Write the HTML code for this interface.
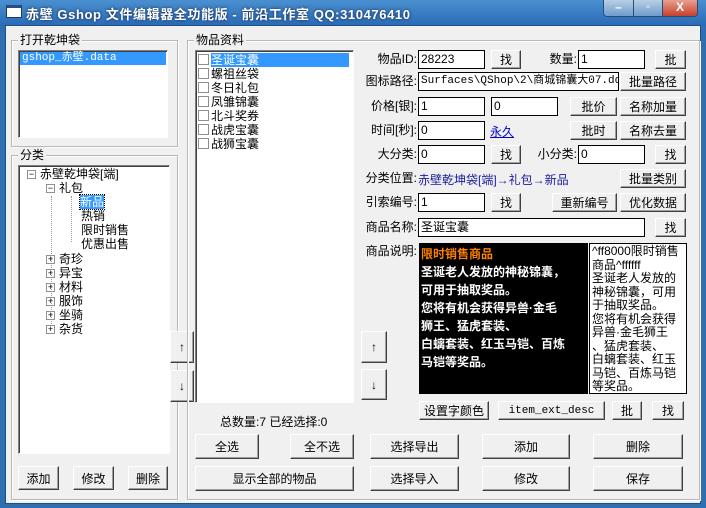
<!DOCTYPE html>
<html><head><meta charset="utf-8"><style>
*{box-sizing:border-box;margin:0;padding:0}
body{width:706px;height:508px;overflow:hidden;background:#2f6fb0;font:12px "Liberation Sans","Noto Sans CJK SC","WenQuanYi Zen Hei",sans-serif;color:#000;position:relative}
.a{position:absolute}
#title{left:0;top:0;width:706px;height:26px;background:linear-gradient(#4a90d0,#2a6ab6);}
#client{left:5px;top:25px;width:696px;height:479px;background:#f0f0f0;border:1px solid #1a4f8a}
.grp{position:absolute;border:1px solid #b8b8b8;box-shadow:inset 1px 1px 0 #fff,1px 1px 0 #fff}
.grp>span{position:absolute;top:-9px;left:6px;background:#f0f0f0;padding:0 2px;line-height:16px}
.box{position:absolute;background:#fff;border:1px solid;border-color:#808080 #fff #fff #808080;box-shadow:inset 1px 1px 0 #404040}
.btn{position:absolute;background:#f0f0f0;border:1px solid;border-color:#fff #404040 #404040 #fff;box-shadow:inset -1px -1px 0 #a0a0a0;text-align:center;display:flex;align-items:center;justify-content:center;white-space:nowrap}
.in{position:absolute;background:#fff;border:1px solid #000;padding-left:2px;line-height:16px;white-space:nowrap;overflow:hidden}
.lb{position:absolute;text-align:right;width:80px;line-height:18px}
.row{position:absolute;line-height:14px;white-space:nowrap}
.pm{display:inline-block;width:9px;height:9px;border:1px solid #919191;background:#fff;font-size:9px;line-height:7px;text-align:center;vertical-align:middle;margin-right:4px}
.cb{display:inline-block;width:11px;height:11px;border:1px solid #8e8e8e;background:#fff;vertical-align:-1px;margin-right:2px}
</style></head><body>
<div id="title" class="a"></div>
<div class="a" style="left:6px;top:5px;width:16px;height:13px;background:#fff;border:1px solid #1a3a6a;border-top:3px solid #2a4a8a"></div>
<div class="a" style="left:26px;top:4px;color:#fff;font-weight:bold;font-size:13px;letter-spacing:0.6px;white-space:nowrap;text-shadow:0 0 3px #124">赤壁 Gshop 文件编辑器全功能版 - 前沿工作室 QQ:310476410</div>
<div class="a" style="left:603px;top:0;width:95px;height:17px;border:1px solid #2a4a7a;border-top:0;border-radius:0 0 4px 4px;display:flex;overflow:hidden">
<div style="width:30px;background:linear-gradient(#b8cfe6,#6f9ccb);border-right:1px solid #2a4a7a;color:#fff;text-align:center;font-weight:bold;line-height:14px">–</div>
<div style="width:29px;background:linear-gradient(#b8cfe6,#6f9ccb);border-right:1px solid #2a4a7a;color:#fff;text-align:center;font-size:10px;line-height:15px">▫</div>
<div style="flex:1;background:linear-gradient(#e8a090,#c8402a);color:#fff;text-align:center;font-weight:bold;line-height:15px">X</div></div>
<div id="client" class="a"></div>

<div class="grp" style="left:11px;top:40px;width:167px;height:107px"><span>打开乾坤袋</span></div>
<div class="box" style="left:18px;top:50px;width:150px;height:88px"><div style="background:#3399ff;color:#fff;margin:1px;padding-left:2px;line-height:13px;font-family:'Liberation Mono','Noto Sans CJK SC',monospace;font-size:11px">gshop_赤壁.data</div></div>

<div class="grp" style="left:11px;top:155px;width:167px;height:345px"><span>分类</span></div>
<div class="box" style="left:18px;top:165px;width:152px;height:289px"></div>
<div class="row" style="left:27px;top:167px"><span class="pm">−</span>赤壁乾坤袋[端]</div>
<div class="row" style="left:46px;top:181px"><span class="pm">−</span>礼包</div>
<div class="row" style="left:80px;top:195px"><span style="background:#3399ff;color:#fff;outline:1px dotted #000">新品</span></div>
<div class="row" style="left:81px;top:209px">热销</div>
<div class="row" style="left:81px;top:223px">限时销售</div>
<div class="row" style="left:81px;top:237px">优惠出售</div>
<div class="row" style="left:46px;top:252px"><span class="pm">+</span>奇珍</div>
<div class="row" style="left:46px;top:266px"><span class="pm">+</span>异宝</div>
<div class="row" style="left:46px;top:280px"><span class="pm">+</span>材料</div>
<div class="row" style="left:46px;top:294px"><span class="pm">+</span>服饰</div>
<div class="row" style="left:46px;top:308px"><span class="pm">+</span>坐骑</div>
<div class="row" style="left:46px;top:322px"><span class="pm">+</span>杂货</div>
<div class="a" style="left:51px;top:196px;height:130px;border-left:1px dotted #999"></div>
<div class="a" style="left:71px;top:196px;height:46px;border-left:1px dotted #999"></div>
<div class="btn" style="left:18px;top:466px;width:41px;height:24px">添加</div>
<div class="btn" style="left:73px;top:466px;width:41px;height:24px">修改</div>
<div class="btn" style="left:128px;top:466px;width:40px;height:24px">删除</div>
<div class="btn" style="left:170px;top:331px;width:24px;height:32px">↑</div>
<div class="btn" style="left:170px;top:370px;width:24px;height:32px">↓</div>

<div class="grp" style="left:187px;top:40px;width:513px;height:460px"><span>物品资料</span></div>
<div class="box" style="left:195px;top:50px;width:159px;height:353px;padding:2px">
<div style="line-height:14px"><span class="cb"></span><span style="background:#3399ff;color:#fff;display:inline-block;width:138px">圣诞宝囊</span></div>
<div style="line-height:14px"><span class="cb"></span>螺祖丝袋</div>
<div style="line-height:14px"><span class="cb"></span>冬日礼包</div>
<div style="line-height:14px"><span class="cb"></span>凤雏锦囊</div>
<div style="line-height:14px"><span class="cb"></span>北斗奖券</div>
<div style="line-height:14px"><span class="cb"></span>战虎宝囊</div>
<div style="line-height:14px"><span class="cb"></span>战狮宝囊</div></div>
<div class="a" style="left:220px;top:413px">总数量:7 已经选择:0</div>
<div class="btn" style="left:195px;top:434px;width:64px;height:25px">全选</div>
<div class="btn" style="left:290px;top:434px;width:64px;height:25px">全不选</div>
<div class="btn" style="left:195px;top:466px;width:159px;height:25px">显示全部的物品</div>

<div class="lb" style="left:337px;top:50px">物品ID:</div><div class="in" style="left:418px;top:50px;width:67px;height:19px">28223</div>
<div class="btn" style="left:491px;top:50px;width:30px;height:19px">找</div>
<div class="lb" style="left:497px;top:50px">数量:</div><div class="in" style="left:578px;top:50px;width:67px;height:19px">1</div>
<div class="btn" style="left:655px;top:50px;width:31px;height:19px">批</div>

<div class="lb" style="left:337px;top:72px">图标路径:</div><div class="in" style="left:418px;top:72px;width:201px;height:19px;font-family:'Liberation Mono','Noto Sans CJK SC',monospace;font-size:11px">Surfaces\QShop\2\商城锦囊大07.dds</div>
<div class="btn" style="left:620px;top:72px;width:66px;height:19px">批量路径</div>

<div class="lb" style="left:337px;top:97px">价格[银]:</div><div class="in" style="left:418px;top:97px;width:67px;height:19px">1</div>
<div class="in" style="left:491px;top:97px;width:67px;height:19px">0</div>
<div class="btn" style="left:570px;top:97px;width:47px;height:19px">批价</div>
<div class="btn" style="left:620px;top:97px;width:66px;height:19px">名称加量</div>

<div class="lb" style="left:337px;top:121px">时间[秒]:</div><div class="in" style="left:418px;top:121px;width:67px;height:19px">0</div>
<div class="a" style="left:490px;top:123px;color:#0000cc;text-decoration:underline">永久</div>
<div class="btn" style="left:570px;top:121px;width:47px;height:19px">批时</div>
<div class="btn" style="left:620px;top:121px;width:66px;height:19px">名称去量</div>

<div class="lb" style="left:337px;top:145px">大分类:</div><div class="in" style="left:418px;top:145px;width:67px;height:19px">0</div>
<div class="btn" style="left:491px;top:145px;width:30px;height:19px">找</div>
<div class="lb" style="left:497px;top:145px">小分类:</div><div class="in" style="left:578px;top:145px;width:67px;height:19px">0</div>
<div class="btn" style="left:655px;top:145px;width:31px;height:19px">找</div>

<div class="lb" style="left:337px;top:169px">分类位置:</div><div class="a" style="left:418px;top:171px;color:#1a1aa0">赤壁乾坤袋[端]→礼包→新品</div>
<div class="btn" style="left:620px;top:169px;width:66px;height:19px">批量类别</div>

<div class="lb" style="left:337px;top:193px">引索编号:</div><div class="in" style="left:418px;top:193px;width:67px;height:19px">1</div>
<div class="btn" style="left:491px;top:193px;width:30px;height:19px">找</div>
<div class="btn" style="left:552px;top:193px;width:65px;height:19px">重新编号</div>
<div class="btn" style="left:620px;top:193px;width:66px;height:19px">优化数据</div>

<div class="lb" style="left:337px;top:218px">商品名称:</div><div class="in" style="left:418px;top:218px;width:227px;height:19px">圣诞宝囊</div>
<div class="btn" style="left:655px;top:218px;width:31px;height:19px">找</div>

<div class="lb" style="left:337px;top:242px">商品说明:</div>
<div class="a" style="left:419px;top:243px;width:169px;height:151px;background:#000;color:#fff;font-weight:bold;padding:2px 2px;line-height:18px;font-size:12px"><span style="color:#ff8000">限时销售商品</span><br>圣诞老人发放的神秘锦囊，<br>可用于抽取奖品。<br>您将有机会获得异兽·金毛<br>狮王、猛虎套装、<br>白螭套装、红玉马铠、百炼<br>马铠等奖品。</div>
<div class="a" style="left:589px;top:243px;width:98px;height:151px;background:#fff;border:1px solid #000;padding:1px 2px;line-height:13.5px;font-size:12px;white-space:nowrap;overflow:hidden">^ff8000限时销售<br>商品^ffffff<br>圣诞老人发放的<br>神秘锦囊，可用<br>于抽取奖品。<br>您将有机会获得<br>异兽·金毛狮王<br>、猛虎套装、<br>白螭套装、红玉<br>马铠、百炼马铠<br>等奖品。</div>
<div class="btn" style="left:361px;top:331px;width:26px;height:32px">↑</div>
<div class="btn" style="left:361px;top:369px;width:26px;height:31px">↓</div>
<div class="btn" style="left:419px;top:401px;width:70px;height:19px">设置字颜色</div>
<div class="btn" style="left:498px;top:401px;width:107px;height:19px;font-family:'Liberation Mono',monospace;font-size:11px">item_ext_desc</div>
<div class="btn" style="left:612px;top:401px;width:30px;height:19px">批</div>
<div class="btn" style="left:652px;top:401px;width:32px;height:19px">找</div>

<div class="btn" style="left:370px;top:434px;width:89px;height:25px">选择导出</div>
<div class="btn" style="left:482px;top:434px;width:88px;height:25px">添加</div>
<div class="btn" style="left:593px;top:434px;width:90px;height:25px">删除</div>
<div class="btn" style="left:370px;top:466px;width:89px;height:25px">选择导入</div>
<div class="btn" style="left:482px;top:466px;width:88px;height:25px">修改</div>
<div class="btn" style="left:593px;top:466px;width:90px;height:25px">保存</div>
</body></html>
